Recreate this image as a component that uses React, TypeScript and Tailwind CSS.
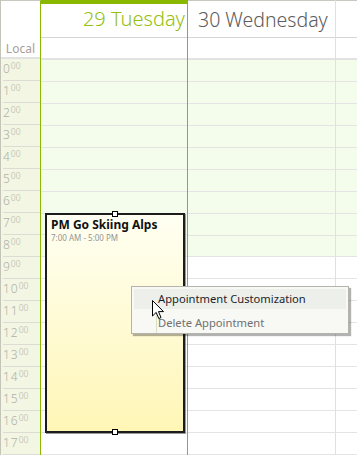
import React from 'react';

const hours = Array.from({ length: 18 }, (_, i) => i);

function DayCells() {
    return (
        <>
            {hours.map((h) => (
                <div
                    key={h}
                    className={`h-[22px] border-b border-[#e4e4e4] ${h < 9 ? 'bg-[#f4fcec]' : 'bg-white'}`}
                />
            ))}
        </>
    );
}

export default function App() {
    return (
        <div className="relative w-[357px] h-[455px] overflow-hidden bg-white flex border-l border-[#c4c4b8] font-['Noto_Sans','Open_Sans',sans-serif]">

            {/* Time ruler */}
            <div className="w-[40px] shrink-0 border-r border-[#8ab800] border-t border-t-[#c8c8c0] flex flex-col">
                <div className="h-[57px] bg-white flex items-end justify-end pr-[5px]">
                    <span className="text-[12px] leading-none text-[#a8a098] pb-[2px]">Local</span>
                </div>
                <div className="h-[2px] bg-[#e2e2e2]" />
                <div className="bg-[#f2f6e2] flex-1">
                    {hours.map((h) => (
                        <div key={h} className="h-[22px] ml-[2px] border-b border-[#dcdcd4] flex items-start pt-[4px] text-[#b0b0a8] font-light leading-none">
                            <span className="text-[12px] tracking-[1px]">{h}</span>
                            <span className="text-[8.5px] -mt-[1px]">00</span>
                        </div>
                    ))}
                </div>
            </div>

            {/* Tuesday */}
            <div className="w-[147px] shrink-0 border-r border-[#8ab800] flex flex-col">
                <div className="h-[4px] bg-[#8ab800]" />
                <div className="h-[33px] flex items-center justify-end pr-[2px] pb-[2px]">
                    <span className="text-[20px] font-light text-[#94c010] leading-none whitespace-nowrap">29 Tuesday</span>
                </div>
                <div className="h-[21px] border-t border-[#d4d4d4]" />
                <div className="h-[2px] bg-[#e2e2e2]" />
                <DayCells />
            </div>

            {/* Wednesday */}
            <div className="w-[148px] shrink-0 border-r border-[#e0e0e0] flex flex-col">
                <div className="h-[37px] border-t border-[#c8c8c0] flex items-center pl-[10px] pt-[1px]">
                    <span className="text-[19.5px] font-light text-[#5c5c5c] leading-none whitespace-nowrap">30 Wednesday</span>
                </div>
                <div className="h-[21px] border-t border-[#d4d4d4]" />
                <div className="h-[2px] bg-[#e2e2e2]" />
                <DayCells />
            </div>

            {/* Next day (cut off) */}
            <div className="flex-1 flex flex-col">
                <div className="h-[37px] border-t border-[#c8c8c0]" />
                <div className="h-[21px] border-t border-[#d4d4d4]" />
                <div className="h-[2px] bg-[#e2e2e2]" />
                <DayCells />
            </div>

            {/* Appointment */}
            <div className="absolute left-[44px] top-[213px] w-[140px] h-[220px] border-2 border-[#1c1c1c] shadow-[1px_1px_0_#9a9a9a] bg-linear-to-b from-[#fffff2] to-[#fff6b6] px-[4px] pt-[2px]">
                <div className="text-[12px] font-bold text-[#111] leading-[16px] whitespace-nowrap">PM Go Skiing Alps</div>
                <div className="text-[8px] text-[#949494] leading-[10px] whitespace-nowrap">7:00 AM - 5:00 PM</div>
                <div className="absolute left-1/2 -top-[4px] -ml-[3px] w-[6px] h-[6px] bg-white border border-black" />
                <div className="absolute left-1/2 -bottom-[4px] -ml-[3px] w-[6px] h-[6px] bg-white border border-black" />
            </div>

            {/* Context menu */}
            <div className="absolute left-[130px] top-[286px] w-[218px] h-[48px] bg-[#f8f8f4] border border-[#b4b4ac] shadow-[2px_2px_1px_rgba(0,0,0,0.3)] py-[2px] px-[2px]">
                <div className="absolute left-[24px] top-[22px] bottom-0 w-px bg-[#d8e0c4]" />
                <div className="relative h-[20px] bg-[#edefea] flex items-center pl-[24px]">
                    <span className="text-[11.2px] text-[#1e1e2a] leading-none whitespace-nowrap">Appointment Customization</span>
                </div>
                <div className="relative h-[24px] flex items-center pl-[24px] pt-[4px]">
                    <span className="text-[11.2px] text-[#707070] leading-none whitespace-nowrap">Delete Appointment</span>
                </div>
            </div>

            {/* Cursor */}
            <svg className="absolute left-[151px] top-[300px]" width="13" height="20" viewBox="0 0 13 20">
                <path d="M0.5 0.5 L0.5 16 L4.2 12.4 L6.8 18.6 L9 17.6 L6.5 11.6 L11.5 11.6 Z" fill="white" stroke="black" strokeWidth="1" strokeLinejoin="miter" />
            </svg>
        </div>
    );
}
